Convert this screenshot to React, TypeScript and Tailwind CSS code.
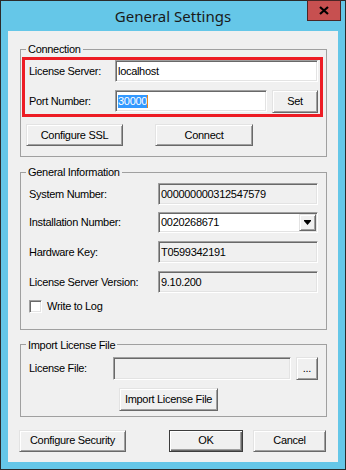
const raised =
  "border border-t-[#e3e3e3] border-l-[#e3e3e3] border-r-[#696969] border-b-[#696969] bg-[#f0f0f0] shadow-[inset_1px_1px_0_#ffffff,inset_-1px_-1px_0_#a0a0a0]";
const sunken =
  "border border-t-[#a0a0a0] border-l-[#a0a0a0] border-r-white border-b-white shadow-[inset_1px_1px_0_#696969,inset_-1px_-1px_0_#e3e3e3]";

function Btn({ label, className = "" }: { label: string; className?: string }) {
  return (
    <button className={`flex items-center justify-center text-black ${raised} ${className}`}>
      {label}
    </button>
  );
}

function Field({
  children,
  readOnly = false,
  className = "",
}: {
  children?: React.ReactNode;
  readOnly?: boolean;
  className?: string;
}) {
  return (
    <div
      className={`flex items-center pl-[2px] ${sunken} ${readOnly ? "bg-[#f0f0f0]" : "bg-white"} ${className}`}
    >
      {children}
    </div>
  );
}

function Group({
  title,
  children,
  className = "",
}: {
  title: string;
  children: React.ReactNode;
  className?: string;
}) {
  return (
    <fieldset className={`w-[307px] border border-[#a0a0a0] ${className}`}>
      <legend className="ml-[5px] px-[2px] leading-[14px]">{title}</legend>
      {children}
    </fieldset>
  );
}

function Row({
  label,
  children,
  className = "",
}: {
  label: string;
  children: React.ReactNode;
  className?: string;
}) {
  return (
    <div className={`flex items-center ${className}`}>
      <div className="w-[137px] pl-[8px]">{label}</div>
      {children}
    </div>
  );
}

export default function App() {
  return (
    <div className="flex h-[470px] w-[346px] flex-col border border-[#2b2b2b] bg-[#65c7e8] font-['Liberation_Sans',Arial,sans-serif] text-[11px] tracking-[-0.3px] text-black">
      {/* title bar */}
      <div className="relative flex h-[30px] items-center justify-center">
        <span className="font-['Noto_Sans',sans-serif] text-[15px] tracking-normal text-[#1a1a1a]">
          General Settings
        </span>
        <div className="absolute right-[4px] top-[-1px] flex h-[21px] w-[34px] items-center justify-center border border-[#4a2626] bg-[#c75050]">
          <svg width="10" height="9" viewBox="0 0 10 9">
            <path d="M1 1 L9 8 M9 1 L1 8" stroke="#000" strokeWidth="2.2" />
          </svg>
        </div>
      </div>

      {/* client area */}
      <div className="mx-[7px] mb-[7px] flex flex-1 flex-col bg-[#f0f0f0] px-[12px]">
        <Group title="Connection" className="mt-[11px]">
          <div className="pb-[10px] pl-[1px] pr-[3px] pt-[1px]">
            <div className="flex flex-col gap-[8px] border-[3px] border-[#ed1c24] pb-[1px]">
              <div className="flex items-center">
                <div className="w-[90px] pl-[4px]">License Server:</div>
                <Field className="h-[22px] w-[203px]">localhost</Field>
              </div>
              <div className="flex items-start">
                <div className="flex h-[22px] w-[90px] items-center pl-[4px]">Port Number:</div>
                <Field className="h-[22px] w-[152px]">
                  <span className="bg-[#3399ff] leading-[13px] text-white">30000</span>
                  <span className="h-[13px] w-[1px] bg-[#e8871e]" />
                </Field>
                <Btn label="Set" className="ml-[5px] h-[23px] w-[46px]" />
              </div>
            </div>
            <div className="mt-[7px] flex gap-[32px] pl-[4px]">
              <Btn label="Configure SSL" className="h-[22px] w-[97px]" />
              <Btn label="Connect" className="h-[22px] w-[98px]" />
            </div>
          </div>
        </Group>

        <Group title="General Information" className="mt-[8px]">
          <div className="flex flex-col pb-[14px] pt-[4px]">
            <Row label="System Number:">
              <Field readOnly className="h-[22px] w-[160px]">000000000312547579</Field>
            </Row>
            <Row label="Installation Number:" className="mt-[7px]">
              <Field className="h-[21px] w-[160px] justify-between pr-[1px]">
                <span>0020268671</span>
                <div className={`flex h-[17px] w-[17px] items-center justify-center ${raised}`}>
                  <svg width="7" height="5" viewBox="0 0 7 5">
                    <path d="M0 0 H7 V1 L3.5 5 L0 1 Z" fill="#000" />
                  </svg>
                </div>
              </Field>
            </Row>
            <Row label="Hardware Key:" className="mt-[8px]">
              <Field readOnly className="h-[22px] w-[160px]">T0599342191</Field>
            </Row>
            <Row label="License Server Version:" className="mt-[8px]">
              <Field readOnly className="h-[22px] w-[160px]">9.10.200</Field>
            </Row>
            <div className="mt-[5px] flex items-center gap-[5px] pl-[8px]">
              <div className={`h-[13px] w-[13px] bg-white ${sunken}`} />
              <span>Write to Log</span>
            </div>
          </div>
        </Group>

        <Group title="Import License File" className="mt-[8px]">
          <div className="flex flex-col pb-[5px] pt-[5px]">
            <div className="flex items-center">
              <div className="w-[92px] pl-[8px]">License File:</div>
              <Field readOnly className="h-[23px] w-[178px]" />
              <Btn label="..." className="ml-[5px] h-[23px] w-[22px]" />
            </div>
            <Btn label="Import License File" className="ml-[98px] mt-[8px] h-[23px] w-[99px]" />
          </div>
        </Group>

        <div className="-ml-[1px] mt-[13px] flex">
          <Btn label="Configure Security" className="h-[22px] w-[107px]" />
          <button className="ml-[43px] flex h-[22px] w-[74px] items-center justify-center border border-[#3c3c3c] bg-[#f0f0f0] shadow-[inset_1px_1px_0_#ffffff,inset_-1px_-1px_0_#696969,inset_-2px_-2px_0_#a0a0a0]">
            OK
          </button>
          <Btn label="Cancel" className="ml-[10px] h-[22px] w-[73px]" />
        </div>
      </div>
    </div>
  );
}
